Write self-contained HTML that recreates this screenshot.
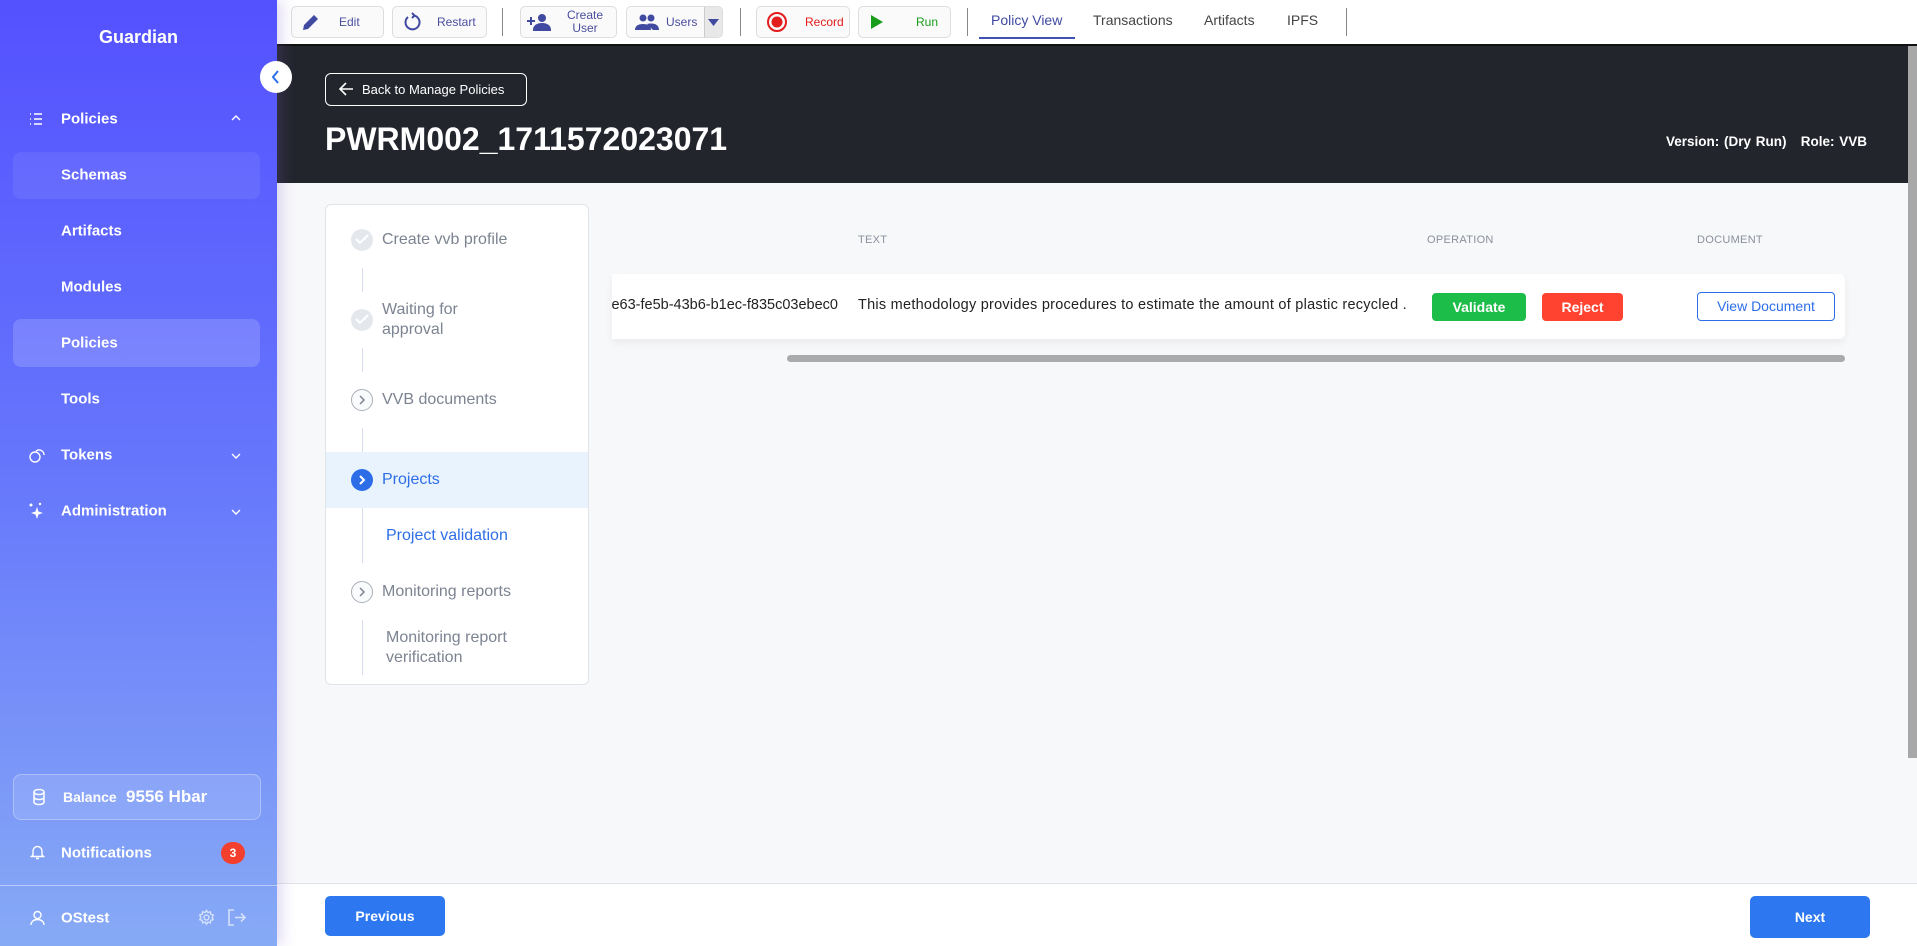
<!DOCTYPE html>
<html><head><meta charset="utf-8"><style>
*{box-sizing:border-box;margin:0;padding:0}
body{width:1917px;height:946px;overflow:hidden;font-family:"Liberation Sans",sans-serif;background:#f7f8fa;position:relative}
.a{position:absolute}
#sb{left:0;top:0;width:277px;height:946px;background:linear-gradient(180deg,#5451ff 0%,#6677fc 50%,#87aaf5 100%);color:#fff;box-shadow:4px 0 14px rgba(120,90,200,.25);z-index:2}
.ni{position:absolute;left:61px;font-size:15px;font-weight:bold;color:#fff;transform:translateY(-50%)}
.hl{position:absolute;left:13px;width:247px;border-radius:8px}
.tb{position:absolute;top:6px;height:32px;border:1px solid #ddd;border-radius:5px;background:#fafafa;font-size:12px;color:#4a4f9e;display:flex;align-items:center}
.sep{position:absolute;top:8px;width:1px;height:28px;background:#888}
.tab{position:absolute;top:12px;font-size:14px;color:#444}
.step{position:absolute;left:382px;font-size:16px;color:#7c8391;transform:translateY(-50%);line-height:20px}
.circ{position:absolute;left:351px;width:22px;height:22px;border-radius:50%;transform:translateY(-50%)}
.vl{position:absolute;left:362px;width:1px;background:#d7dcef}
.th{position:absolute;top:234px;font-size:11px;color:#8a8f9c;letter-spacing:.3px}
</style></head><body>
<div id="sb" class="a">
 <div class="a" style="left:0;width:277px;top:27px;text-align:center;font-size:18px;font-weight:bold">Guardian</div>
 <div class="hl" style="top:152px;height:47px;background:rgba(255,255,255,.07)"></div>
 <div class="hl" style="top:319px;height:48px;background:rgba(255,255,255,.16)"></div>
 <svg class="a" style="left:29px;top:112px" width="14" height="14" viewBox="0 0 14 14" stroke="#fff" stroke-width="1.4" fill="none"><path d="M1 2h1M1 7h1M1 12h1M5 2h8M5 7h8M5 12h8"/></svg>
 <div class="ni" style="top:119px">Policies</div>
 <svg class="a" style="left:231px;top:114px" width="10" height="8" viewBox="0 0 10 8" stroke="#fff" stroke-width="1.4" fill="none"><path d="M1 6l4-4 4 4"/></svg>
 <div class="ni" style="top:175px">Schemas</div>
 <div class="ni" style="top:231px">Artifacts</div>
 <div class="ni" style="top:287px">Modules</div>
 <div class="ni" style="top:343px">Policies</div>
 <div class="ni" style="top:399px">Tools</div>
 <svg class="a" style="left:29px;top:447px" width="16" height="16" viewBox="0 0 16 16" stroke="#fff" stroke-width="1.4" fill="none"><circle cx="6" cy="10" r="5"/><path d="M7 4a5 5 0 0 1 8 4"/></svg>
 <div class="ni" style="top:455px">Tokens</div>
 <svg class="a" style="left:231px;top:452px" width="10" height="8" viewBox="0 0 10 8" stroke="#fff" stroke-width="1.4" fill="none"><path d="M1 2l4 4 4-4"/></svg>
 <svg class="a" style="left:28px;top:502px" width="16" height="18" viewBox="0 0 16 18" fill="#fff"><path d="M9 5l1.5 4.5L15 11l-4.5 1.5L9 17l-1.5-4.5L3 11l4.5-1.5z"/><circle cx="3" cy="3" r="1.5"/><circle cx="12" cy="2" r="1.2"/></svg>
 <div class="ni" style="top:511px">Administration</div>
 <svg class="a" style="left:231px;top:508px" width="10" height="8" viewBox="0 0 10 8" stroke="#fff" stroke-width="1.4" fill="none"><path d="M1 2l4 4 4-4"/></svg>
 <div class="a" style="left:13px;top:774px;width:248px;height:46px;border:1px solid rgba(255,255,255,.3);border-radius:8px;background:rgba(255,255,255,.12)"></div>
 <svg class="a" style="left:32px;top:788px" width="14" height="18" viewBox="0 0 14 18" stroke="#fff" stroke-width="1.5" fill="none"><ellipse cx="7" cy="4" rx="5" ry="2.5"/><path d="M2 4v10c0 1.5 2.2 2.5 5 2.5s5-1 5-2.5V4M2 9c0 1.5 2.2 2.5 5 2.5S12 10.5 12 9"/></svg>
 <div class="a" style="left:63px;top:789px;font-size:14px;font-weight:bold">Balance</div>
 <div class="a" style="left:126px;top:787px;font-size:17px;font-weight:bold">9556 Hbar</div>
 <svg class="a" style="left:30px;top:844px" width="15" height="16" viewBox="0 0 15 16" stroke="#fff" stroke-width="1.4" fill="none"><path d="M3 11V7a4.5 4.5 0 0 1 9 0v4l1.5 1.5h-12zM6 14.5h3"/></svg>
 <div class="ni" style="top:853px">Notifications</div>
 <div class="a" style="left:221px;top:842px;width:24px;height:22px;border-radius:11px;background:#f23f2e;font-size:12px;font-weight:bold;text-align:center;line-height:22px">3</div>
 <div class="a" style="left:0;top:885px;width:277px;height:1px;background:rgba(255,255,255,.45)"></div>
 <svg class="a" style="left:30px;top:910px" width="15" height="16" viewBox="0 0 15 16" stroke="#fff" stroke-width="1.4" fill="none"><circle cx="7.5" cy="5" r="3.5"/><path d="M1 15c0-3.5 3-5.5 6.5-5.5S14 11.5 14 15"/></svg>
 <div class="ni" style="top:918px">OStest</div>
 <svg class="a" style="left:198px;top:909px" width="17" height="17" viewBox="0 0 24 24" stroke="rgba(255,255,255,.65)" stroke-width="2" fill="none"><circle cx="12" cy="12" r="3.5"/><path d="M12 2l2 3 3.5-1 .5 3.5 3.5 1-1.5 3.5 1.5 3-3.5 1-.5 3.5-3.5-1-2 3-2-3-3.5 1-.5-3.5-3.5-1 1.5-3-1.5-3.5 3.5-1 .5-3.5 3.5 1z"/></svg>
 <svg class="a" style="left:228px;top:909px" width="18" height="17" viewBox="0 0 18 17" stroke="rgba(255,255,255,.65)" stroke-width="1.6" fill="none"><path d="M6 1H1v15h5M7 8.5h10M13 4.5l4 4-4 4"/></svg>
</div>
<div class="a" style="left:260px;top:61px;width:32px;height:32px;border-radius:50%;background:#fff;z-index:3"></div>
<svg class="a" style="left:270px;top:69px;z-index:4" width="12" height="16" viewBox="0 0 12 16" stroke="#2d6ee8" stroke-width="2" fill="none"><path d="M8 2L3 8l5 6"/></svg>

<!-- toolbar -->
<div class="a" style="left:277px;top:0;width:1640px;height:46px;background:#fff;border-bottom:2px solid #111"></div>
<div class="tb" style="left:291px;width:93px"><svg style="margin-left:9px" width="20" height="20" viewBox="0 0 20 20" fill="#3f4aa0"><path d="M2 18l1-5L13 3l4 4L7 17z"/></svg><span style="margin-left:18px">Edit</span></div>
<div class="tb" style="left:392px;width:95px"><svg style="margin-left:10px" width="18" height="20" viewBox="0 0 18 20" stroke="#3f4aa0" stroke-width="2" fill="none"><path d="M5 5a7 7 0 1 0 6-1.5M9 1l2.5 2.5L9 6"/></svg><span style="margin-left:16px">Restart</span></div>
<div class="sep" style="left:502px"></div>
<div class="tb" style="left:520px;width:97px"><svg style="margin-left:6px" width="24" height="18" viewBox="0 0 24 18" fill="#3f4aa0"><circle cx="15" cy="5" r="4"/><path d="M7 17c0-4 3.5-6 8-6s8 2 8 6zM4 4v8M0 8h8" stroke="#3f4aa0" stroke-width="2"/></svg><span style="margin-left:16px;text-align:center;line-height:13px">Create<br>User</span></div>
<div class="tb" style="left:626px;width:97px;overflow:hidden"><svg style="margin-left:8px" width="24" height="16" viewBox="0 0 24 16" fill="#3f4aa0"><circle cx="8" cy="4" r="3.5"/><circle cx="16" cy="4" r="3.5"/><path d="M0 16c0-4 3-6 8-6s8 2 8 6zM12 10c1-.5 2.5-.5 4-.5 5 0 8 2 8 6.5h-6"/></svg><span style="margin-left:7px">Users</span><span style="position:absolute;right:0;top:0;width:18px;height:30px;background:#e8e8e8;border-left:1px solid #ccc"></span><svg style="position:absolute;right:3px;top:12px" width="11" height="7" viewBox="0 0 11 7" fill="#3f4aa0"><path d="M0 0h11L5.5 7z"/></svg></div>
<div class="sep" style="left:740px"></div>
<div class="tb" style="left:756px;width:94px;color:#e31c1c"><svg style="margin-left:9px" width="22" height="22" viewBox="0 0 22 22"><circle cx="11" cy="11" r="9" stroke="#e31c1c" stroke-width="2" fill="none"/><circle cx="11" cy="11" r="5.5" fill="#e31c1c"/></svg><span style="margin-left:17px">Record</span></div>
<div class="tb" style="left:858px;width:93px;color:#1a9d1a"><svg style="margin-left:11px" width="14" height="16" viewBox="0 0 14 16" fill="#1a9d1a"><path d="M1 1l12 7-12 7z"/></svg><span style="margin-left:32px">Run</span></div>
<div class="sep" style="left:967px"></div>
<div class="tab" style="left:991px;color:#3f4aa0">Policy View</div>
<div class="a" style="left:979px;top:37px;width:96px;height:2px;background:#3f51b5"></div>
<div class="tab" style="left:1093px">Transactions</div>
<div class="tab" style="left:1204px">Artifacts</div>
<div class="tab" style="left:1287px">IPFS</div>
<div class="sep" style="left:1346px"></div>

<!-- header -->
<div class="a" style="left:277px;top:46px;width:1631px;height:137px;background:#23252d"></div>
<div class="a" style="left:325px;top:73px;width:202px;height:33px;border:1px solid #fff;border-radius:6px;color:#fff;font-size:13px;line-height:31px;padding-left:36px">Back to Manage Policies</div>
<svg class="a" style="left:339px;top:82px" width="15" height="14" viewBox="0 0 15 14" stroke="#fff" stroke-width="1.6" fill="none"><path d="M14 7H2M7 1L1 7l6 6"/></svg>
<div class="a" style="left:325px;top:121px;color:#fff;font-size:32px;font-weight:bold;letter-spacing:0">PWRM002_1711572023071</div>
<div class="a" style="left:1666px;top:134px;color:#fff;font-size:13.5px;font-weight:bold;word-spacing:1px">Version: (Dry Run) &nbsp; Role: VVB</div>
<div class="a" style="left:1908px;top:46px;width:9px;height:712px;background:#a8a8a8"></div>

<!-- steps -->
<div class="a" style="left:325px;top:204px;width:264px;height:481px;background:#fff;border:1px solid #e1e4ea;border-radius:6px"></div>
<div class="a" style="left:326px;top:452px;width:262px;height:56px;background:#e9f3fe"></div>
<div class="circ" style="top:240px;background:#e4e7ec"></div>
<svg class="a" style="left:355px;top:233px" width="14" height="12" viewBox="0 0 14 12" stroke="#fff" stroke-width="2" fill="none"><path d="M1 6l4 4 8-8"/></svg>
<div class="step" style="top:240px">Create vvb profile</div>
<div class="vl" style="top:268px;height:24px"></div>
<div class="circ" style="top:320px;background:#e4e7ec"></div>
<svg class="a" style="left:355px;top:313px" width="14" height="12" viewBox="0 0 14 12" stroke="#fff" stroke-width="2" fill="none"><path d="M1 6l4 4 8-8"/></svg>
<div class="step" style="top:320px">Waiting for<br>approval</div>
<div class="vl" style="top:348px;height:24px"></div>
<div class="circ" style="top:400px;border:1px solid #a8aeb8;background:#fafbfc"></div>
<svg class="a" style="left:359px;top:395px" width="7" height="10" viewBox="0 0 7 10" stroke="#7c8391" stroke-width="1.5" fill="none"><path d="M1 1l4 4-4 4"/></svg>
<div class="step" style="top:400px">VVB documents</div>
<div class="vl" style="top:428px;height:24px"></div>
<div class="circ" style="top:480px;background:#2d6ee8"></div>
<svg class="a" style="left:359px;top:475px" width="7" height="10" viewBox="0 0 7 10" stroke="#fff" stroke-width="2" fill="none"><path d="M1 1l4 4-4 4"/></svg>
<div class="step" style="top:480px;color:#2d6ee8">Projects</div>
<div class="vl" style="top:508px;height:55px"></div>
<div class="step" style="left:386px;top:536px;color:#2d6ee8">Project validation</div>
<div class="circ" style="top:592px;border:1px solid #a8aeb8;background:#fafbfc"></div>
<svg class="a" style="left:359px;top:587px" width="7" height="10" viewBox="0 0 7 10" stroke="#7c8391" stroke-width="1.5" fill="none"><path d="M1 1l4 4-4 4"/></svg>
<div class="step" style="top:592px">Monitoring reports</div>
<div class="vl" style="top:620px;height:55px"></div>
<div class="step" style="left:386px;top:648px">Monitoring report<br>verification</div>

<!-- table -->
<div class="th" style="left:858px">TEXT</div>
<div class="th" style="left:1427px">OPERATION</div>
<div class="th" style="left:1697px">DOCUMENT</div>
<div class="a" style="left:612px;top:274px;width:1233px;height:65px;background:#fff;border-radius:0 6px 6px 0;box-shadow:0 4px 8px rgba(0,0,0,.06);overflow:hidden">
 <div class="a" style="right:1007px;top:23px;font-size:14.5px;color:#222;white-space:nowrap">1a2b3c4d-5e63-fe5b-43b6-b1ec-f835c03ebec0</div>
 <div class="a" style="left:246px;top:23px;font-size:14.5px;color:#222;white-space:nowrap;letter-spacing:.25px">This methodology provides procedures to estimate the amount of plastic recycled .</div>
 <div class="a" style="left:820px;top:19px;width:94px;height:28px;background:#1dbd4a;border-radius:4px;color:#fff;font-size:14px;font-weight:bold;text-align:center;line-height:28px">Validate</div>
 <div class="a" style="left:930px;top:19px;width:81px;height:28px;background:#ff4330;border-radius:4px;color:#fff;font-size:14px;font-weight:bold;text-align:center;line-height:28px">Reject</div>
 <div class="a" style="left:1085px;top:18px;width:138px;height:29px;border:1px solid #2d6ee8;border-radius:4px;color:#2d6ee8;font-size:14px;text-align:center;line-height:27px">View Document</div>
</div>
<div class="a" style="left:787px;top:355px;width:1058px;height:7px;background:#aaabad;border-radius:4px"></div>

<!-- footer -->
<div class="a" style="left:277px;top:883px;width:1640px;height:63px;background:#fff;border-top:1px solid #e1e3ea"></div>
<div class="a" style="left:325px;top:896px;width:120px;height:40px;background:#2d78f0;border-radius:5px;color:#fff;font-size:14px;font-weight:bold;text-align:center;line-height:40px">Previous</div>
<div class="a" style="left:1750px;top:896px;width:120px;height:42px;background:#2d78f0;border-radius:5px;color:#fff;font-size:14px;font-weight:bold;text-align:center;line-height:42px">Next</div>
</body></html>
